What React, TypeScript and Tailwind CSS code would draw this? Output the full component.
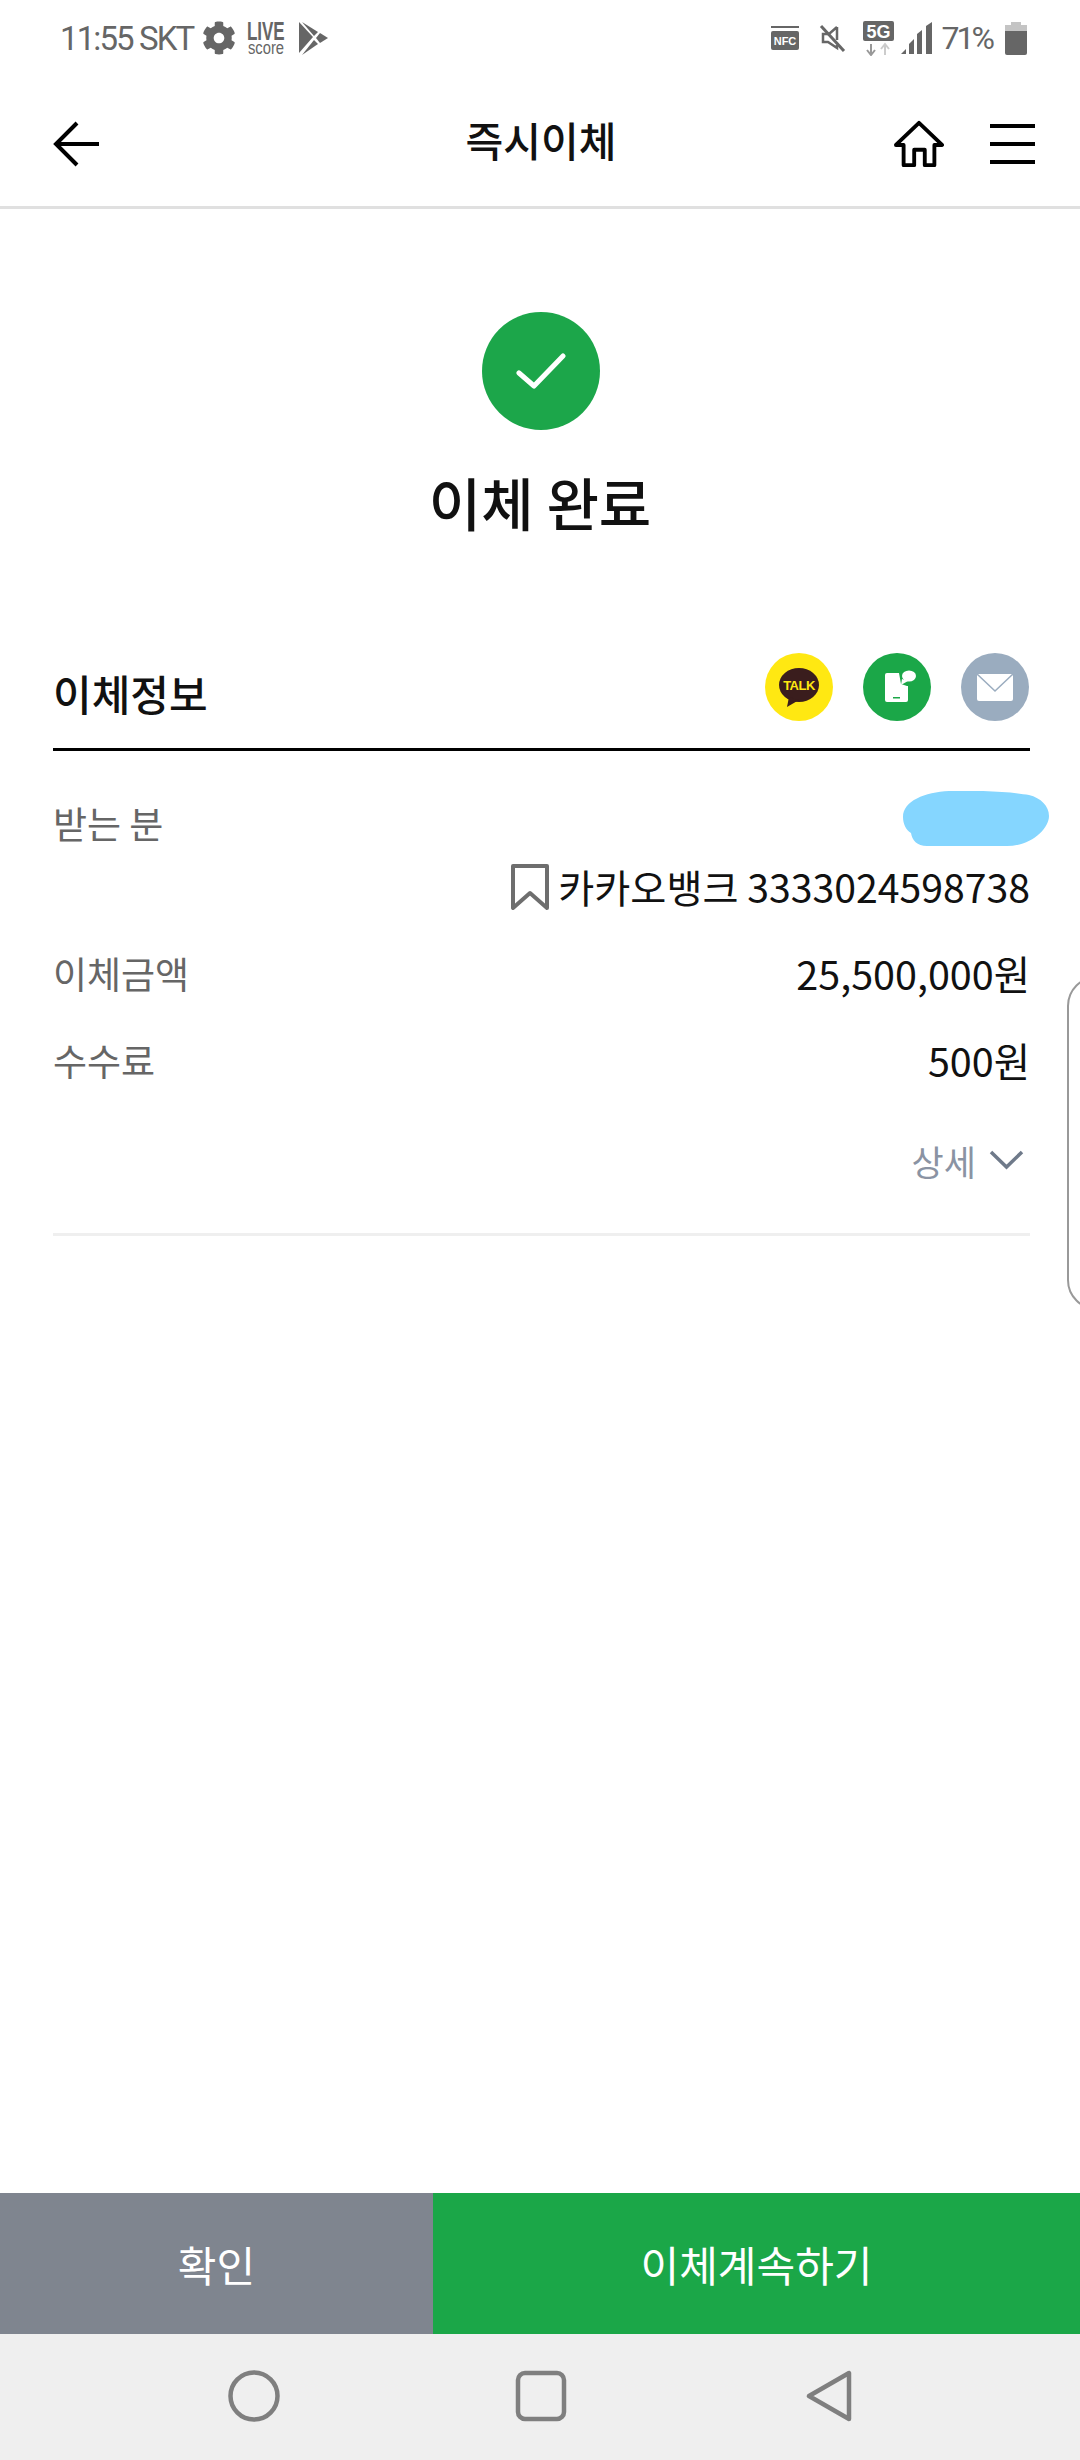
import { FaCog } from "react-icons/fa";

const rows = [
  { label: "이체금액", value: "25,500,000원", height: "h-[86px]" },
  { label: "수수료", value: "500원", height: "h-[88px]" },
];

function StatusBar() {
  return (
    <div className="flex h-[76px] items-center justify-between pl-[60px] pr-[53px] text-[#666] font-['Roboto',sans-serif]">
      <div className="flex items-center">
        <span className="text-[33px] leading-none tracking-[-1.9px]">11:55 SKT</span>
        <FaCog className="ml-[9px] h-[34px] w-[34px]" />
        <div className="ml-[10px] flex w-[40px] flex-col items-center font-['Liberation_Sans',sans-serif] leading-none">
          <span className="origin-center scale-x-[0.68] text-[25px] font-bold leading-[20px]">LIVE</span>
          <span className="origin-center scale-x-[0.82] text-[18px] leading-[15px]">score</span>
        </div>
        <svg className="ml-[12px] h-[33px] w-[30px]" viewBox="0 0 30 33" fill="currentColor">
          <path d="M1 0 15 15 1 31z" />
          <path d="M4 0 20 10 16 14z" />
          <path d="M4 33 20 22 16 18z" />
          <path d="M22 11 30 16 22 21 18 16z" />
        </svg>
      </div>
      <div className="flex items-center">
        <svg className="h-[24px] w-[28px]" viewBox="0 0 28 24">
          <rect y="0" width="28" height="2" fill="#666" />
          <rect y="5" width="28" height="19" rx="2" fill="#666" />
          <text x="14" y="19" textAnchor="middle" fontSize="11" fontWeight="700" fill="#fff" fontFamily="Liberation Sans">NFC</text>
        </svg>
        <svg className="ml-[20px] h-[28px] w-[27px]" viewBox="0 0 27 28" fill="none" stroke="#666" strokeWidth="3">
          <path d="M2 2 25 27" />
          <path d="M18 3V16M18 3 10 10H4V18H9L18 24V21" strokeWidth="2.5" />
        </svg>
        <svg className="ml-[17px] h-[35px] w-[31px]" viewBox="0 0 31 35">
          <rect width="31" height="20" rx="2" fill="#666" />
          <text x="15.5" y="16.5" textAnchor="middle" fontSize="18" fontWeight="700" fill="#fff" fontFamily="Liberation Sans">5G</text>
          <path d="M8 23V33M4 29 8 34 12 29" stroke="#999" strokeWidth="2" fill="none" />
          <path d="M22 34V24M18 28 22 23 26 28" stroke="#ccc" strokeWidth="2" fill="none" />
        </svg>
        <svg className="ml-[7px] h-[32px] w-[32px]" viewBox="0 0 32 32" fill="#666">
          <path d="M0 32 5 27V32z" />
          <path d="M8 32V22L13 17V32z" />
          <path d="M16 32V12L21 8V32z" />
          <path d="M25 32V4L31 0V32z" />
        </svg>
        <span className="ml-[9px] text-[32px] leading-none tracking-[-3px]">71%</span>
        <svg className="ml-[13px] h-[33px] w-[22px]" viewBox="0 0 22 33">
          <rect x="6" width="10" height="3" fill="#c4c4c4" />
          <rect y="3" width="22" height="6" fill="#c4c4c4" />
          <path d="M0 9H22V31a2 2 0 0 1-2 2H2a2 2 0 0 1-2-2z" fill="#666" />
        </svg>
      </div>
    </div>
  );
}

function Header() {
  return (
    <div className="grid h-[133px] grid-cols-[1fr_auto_1fr] items-center border-b-[3px] border-[#e0e0e0] pt-[6px] pl-[44px] pr-[44px]">
      <svg className="ml-[9px] h-[46px] w-[46px]" viewBox="0 0 46 46" fill="none" stroke="#000" strokeWidth="4">
        <path d="M46 23H3M24 2 3 23 24 44" />
      </svg>
      <span className="-mt-[9px] ml-[2px] text-[41px] font-medium leading-none text-[#111]">즉시이체</span>
      <div className="flex items-center justify-end">
        <svg className="h-[48px] w-[50px]" viewBox="0 0 52 48" fill="none" stroke="#000" strokeWidth="4" strokeLinejoin="round">
          <path d="M2 25 26 2 50 25H42V46H32V30H21V46H10V25z" />
        </svg>
        <div className="ml-[46px] mr-[1px] flex h-[40px] w-[45px] flex-col justify-between">
          <div className="h-[4px] bg-black" />
          <div className="h-[4px] bg-black" />
          <div className="h-[4px] bg-black" />
        </div>
      </div>
    </div>
  );
}

function ShareIcons() {
  return (
    <div className="flex items-center gap-[30px]">
      <svg className="h-[68px] w-[68px]" viewBox="0 0 68 68">
        <circle cx="34" cy="34" r="34" fill="#ffe812" />
        <ellipse cx="34" cy="32" rx="20" ry="17" fill="#3a1d1d" />
        <path d="M24 44 22 54 34 47z" fill="#3a1d1d" />
        <text x="34" y="37" textAnchor="middle" fontSize="13" fontWeight="700" fill="#ffe812" fontFamily="Liberation Sans" letterSpacing="-0.5">TALK</text>
      </svg>
      <svg className="h-[68px] w-[68px]" viewBox="0 0 68 68">
        <circle cx="34" cy="34" r="34" fill="#1ba748" />
        <path d="M24 20H36L38 31 44 33H45V47a2 2 0 0 1-2 2H24a2 2 0 0 1-2-2V22a2 2 0 0 1 2-2z" fill="#fff" />
        <rect x="30" y="44" width="7" height="1.5" fill="#1ba748" />
        <ellipse cx="46" cy="23" rx="7" ry="5.5" fill="#fff" />
        <path d="M39 26 38 32 45 28z" fill="#fff" />
      </svg>
      <svg className="h-[68px] w-[68px]" viewBox="0 0 68 68">
        <circle cx="34" cy="34" r="34" fill="#9aacbf" />
        <rect x="16" y="21" width="36" height="27" rx="2" fill="#fff" />
        <path d="M16 21 34 38 52 21" fill="none" stroke="#9aacbf" strokeWidth="1.5" />
      </svg>
    </div>
  );
}

export default function App() {
  return (
    <div className="relative flex h-[2460px] w-[1080px] flex-col overflow-hidden bg-white font-['Noto_Sans_CJK_KR',sans-serif]">
      <StatusBar />
      <Header />

      <main className="flex flex-1 flex-col">
        <div className="mt-[103px] flex flex-col items-center">
          <div className="ml-[2px] flex h-[118px] w-[118px] items-center justify-center rounded-full bg-[#1ca64a]">
            <svg className="h-[36px] w-[50px]" viewBox="0 0 50 36" fill="none" stroke="#fff" strokeWidth="5" strokeLinecap="round" strokeLinejoin="round">
              <path d="M3 20 18 33 47 3" />
            </svg>
          </div>
          <h1 className="mt-[40px] text-[57px] font-medium leading-[62px] text-[#111]">이체 완료</h1>
        </div>

        <section className="ml-[53px] mr-[50px] mt-[110px]">
          <div className="flex h-[109px] items-center justify-between border-b-[3px] border-black pb-[10px]">
            <h2 className="mt-[5px] text-[42px] font-medium leading-none text-[#111]">이체정보</h2>
            <div className="-mt-[7px] mr-[1px]">
              <ShareIcons />
            </div>
          </div>

          <div className="relative mt-[40px] flex h-[64px] items-center justify-between">
            <span className="text-[37px] leading-none text-[#666]">받는 분</span>
            <svg className="absolute -right-[19px] top-0 h-[56px] w-[146px]" viewBox="0 0 146 56" fill="#85d6ff">
              <path d="M0 26C0 10 22 1 46 0 78-1 110 1 126 4 138 7 146 15 146 25 146 38 128 55 104 55H24C14 55 9 49 8 42 3 39 0 33 0 26z" />
            </svg>
          </div>

          <div className="mb-[12px] flex h-[63px] items-center justify-end">
            <svg className="h-[46px] w-[38px]" viewBox="0 0 38 46" fill="none" stroke="#6e6e6e" strokeWidth="4" strokeLinejoin="round">
              <path d="M2 2H36V44L19 29 2 44z" />
            </svg>
            <span className="ml-[9px] text-[39.2px] leading-none text-[#111]">카카오뱅크 3333024598738</span>
          </div>

          {rows.map((row) => (
            <div key={row.label} className={`flex items-center justify-between ${row.height}`}>
              <span className="text-[37px] leading-none text-[#666]">{row.label}</span>
              <span className="text-[39.5px] leading-none text-[#111]">{row.value}</span>
            </div>
          ))}

          <div className="flex h-[112px] items-center justify-end pr-[6px]">
            <span className="text-[35px] leading-none text-[#8a93a3]">상세</span>
            <svg className="ml-[13px] h-[20px] w-[35px]" viewBox="0 0 35 20" fill="none" stroke="#6f7a8a" strokeWidth="3.5">
              <path d="M2 2 17.5 17 33 2" />
            </svg>
          </div>

          <div className="mt-[17px] h-[3px] bg-[#efefef]" />
        </section>
      </main>

      <div className="flex h-[141px]">
        <button className="w-[433px] bg-[#7f858f] text-[42px] leading-none text-white">확인</button>
        <button className="flex-1 bg-[#1ba748] text-[42px] leading-none text-white">이체계속하기</button>
      </div>

      <nav className="flex h-[126px] items-center bg-[#efefef] pb-[2px] pl-[228px]">
        <svg className="h-[52px] w-[52px]" viewBox="0 0 52 52" fill="none" stroke="#7f7f7f" strokeWidth="4.5">
          <circle cx="26" cy="26" r="23.5" />
        </svg>
        <svg className="ml-[235px] h-[52px] w-[52px]" viewBox="0 0 52 52" fill="none" stroke="#7f7f7f" strokeWidth="4.5">
          <rect x="3" y="3" width="46" height="46" rx="7" />
        </svg>
        <svg className="ml-[239px] h-[52px] w-[46px]" viewBox="0 0 46 52" fill="none" stroke="#7f7f7f" strokeWidth="4.5" strokeLinejoin="round">
          <path d="M43 3V49L3 26z" />
        </svg>
      </nav>

      {/* edge panel handle, runs off the right of the screen */}
      <div className="absolute -right-[27px] top-[976px] h-[334px] w-[40px] rounded-l-[30px] border-[2px] border-[#999]" />
    </div>
  );
}
